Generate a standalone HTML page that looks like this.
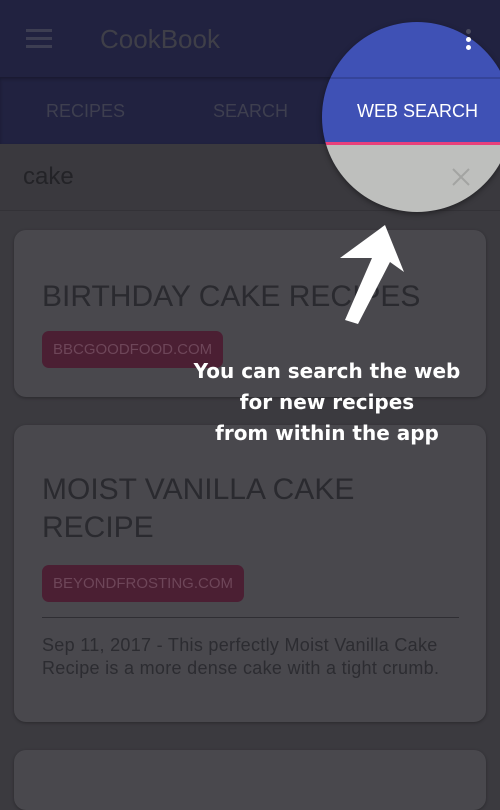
<!DOCTYPE html>
<html><head><style>
body{margin:0;width:500px;height:788px;overflow:hidden;background:#3b3a3f;font-family:"Liberation Sans",sans-serif;position:relative}
.abs{position:absolute}
.card{position:absolute;left:14px;width:472px;background:#49484d;border-radius:12px;box-shadow:0 1px 3px rgba(0,0,0,.3)}
.title{position:absolute;left:28px;font-size:30px;color:#2a2a2f;line-height:38px}
.chip{position:absolute;left:28px;background:#4b1f33;border-radius:7px;color:#6e4659;font-size:15px;line-height:37px;padding:0 11px}
</style></head><body>
<div class="abs" style="left:0;top:0;width:500px;height:77px;background:#212240"></div>
<div class="abs" style="left:0;top:77px;width:500px;height:67px;background:#212240;box-shadow:inset 0 2px 3px rgba(0,0,0,.25)"></div>
<div class="abs" style="left:26px;top:29px;width:26px;height:3px;background:#3d3e52;box-shadow:0 8px 0 #3d3e52,0 16px 0 #3d3e52"></div>
<div class="abs" style="left:100px;top:24px;font-size:26px;color:#3f3f48">CookBook</div>
<div class="abs" style="left:46px;top:101px;font-size:18px;color:#3e3f4f">RECIPES</div>
<div class="abs" style="left:213px;top:101px;font-size:18px;color:#3e3f4f">SEARCH</div>
<div class="abs" style="left:0;top:144px;width:500px;height:66px;background:#3a393e;border-bottom:1px solid #333237"></div>
<div class="abs" style="left:23px;top:163px;font-size:24px;color:#232327">cake</div>
<div class="card" style="top:230px;height:167px">
<div class="title" style="top:48px">BIRTHDAY CAKE RECIPES</div>
<div class="chip" style="top:101px">BBCGOODFOOD.COM</div>
</div>
<div class="card" style="top:425px;height:297px">
<div class="title" style="top:46px">MOIST VANILLA CAKE<br>RECIPE</div>
<div class="chip" style="top:140px">BEYONDFROSTING.COM</div>
<div class="abs" style="left:28px;top:192px;width:417px;height:1px;background:#2f2e33"></div>
<div class="abs" style="left:28px;top:209px;font-size:18px;letter-spacing:0.3px;line-height:23px;color:#2c2c31;white-space:nowrap">Sep 11, 2017 - This perfectly Moist Vanilla Cake<br>Recipe is a more dense cake with a tight crumb.</div>
</div>
<div class="card" style="top:750px;height:60px"></div>
<div class="abs" style="left:322px;top:22px;width:190px;height:190px;border-radius:50%;overflow:hidden;box-shadow:0 2px 6px rgba(0,0,0,.4)">
 <div class="abs" style="left:0;top:0;width:190px;height:122px;background:#3f51b5"></div>
 <div class="abs" style="left:0;top:55px;width:190px;height:2px;background:rgba(0,0,0,.15)"></div>
 <div class="abs" style="left:0;top:120px;width:190px;height:3px;background:#e9407a"></div>
 <div class="abs" style="left:0;top:123px;width:190px;height:70px;background:#bebfbd"></div>
 <div class="abs" style="left:35px;top:79px;font-size:18px;color:#fff">WEB SEARCH</div>
 <svg class="abs" style="left:128px;top:144px" width="22" height="22"><path d="M3 3L19 19M19 3L3 19" stroke="#a3a4a2" stroke-width="2"/></svg>
</div>
<div class="abs" style="left:466px;top:29px;width:5px;height:5px;border-radius:50%;background:#4a4b5e;box-shadow:0 8px 0 #fff,0 16px 0 #fff"></div>
<svg class="abs" style="left:0;top:0" width="500" height="788"><path d="M385 225L404 272L390 262L358 324L345 320L372 258L340 258Z" fill="#fff"/></svg>
<div class="abs" style="left:170px;top:356px;width:314px;text-align:center;font-size:20px;font-weight:bold;line-height:31px;color:#fff;font-family:'DejaVu Sans',sans-serif">You can search the web<br>for new recipes<br>from within the app</div>
</body></html>
